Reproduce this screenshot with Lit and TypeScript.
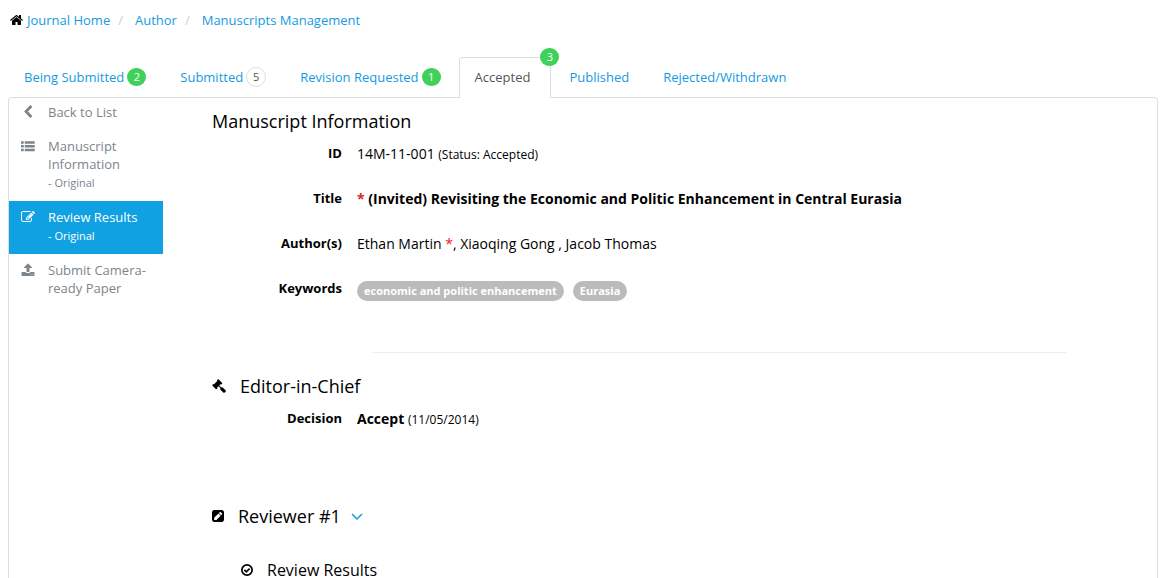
import { LitElement, html, css, svg, nothing } from "lit";
import { customElement, property, state } from "lit/decorators.js";

const ICONS: Record<string, unknown> = {
  home: svg`<path d="M1408 992v480q0 26-19 45t-45 19h-384v-384h-256v384h-384q-26 0-45-19t-19-45v-480q0-1 .5-3t.5-3l575-474 575 474q1 2 1 6zm223-69l-62 74q-8 9-21 11h-3q-13 0-21-7l-692-577-692 577q-12 8-24 7-13-2-21-11l-62-74q-8-10-7-23.5t11-21.5l719-599q32-26 76-26t76 26l244 204v-195q0-14 9-23t23-9h192q14 0 23 9t9 23v408l219 182q10 8 11 21.5t-7 23.5z"/>`,
  back: svg`<path d="M1427 301l-531 531 531 531q19 19 19 45t-19 45l-166 166q-19 19-45 19t-45-19l-742-742q-19-19-19-45t19-45l742-742q19-19 45-19t45 19l166 166q19 19 19 45t-19 45z"/>`,
  list: svg`<path d="M0 288h352v320H0zM0 768h352v320H0zM0 1248h352v320H0zM480 288h1280v320H480zM480 768h1280v320H480zM480 1248h1280v320H480z"/>`,
  edit: svg`<path d="M888 1184l116-116-152-152-116 116v56h96v96h56zm440-720q-16-16-33 1l-350 350q-17 17-1 33t33-1l350-350q17-17 1-33zm80 594v190q0 119-84.5 203.5t-203.5 84.500h-832q-119 0-203.5-84.5t-84.5-203.5v-832q0-119 84.5-203.5t203.5-84.5h832q63 0 117 25 15 7 18 23 3 17-9 29l-49 49q-14 14-32 8-23-6-45-6h-832q-66 0-113 47t-47 113v832q0 66 47 113t113 47h832q66 0 113-47t47-113v-126q0-13 9-22l64-64q15-15 35-7t20 29zm-96-738l288 288-672 672h-288v-288zm444 132l-92 92-288-288 92-92q28-28 68-28t68 28l152 152q28 28 28 68t-28 68z"/>`,
  upload: svg`<path d="M1344 1472q0-26-19-45t-45-19-45 19-19 45 19 45 45 19 45-19 19-45zm256 0q0-26-19-45t-45-19-45 19-19 45 19 45 45 19 45-19 19-45zm128-224v320q0 40-28 68t-68 28h-1472q-40 0-68-28t-28-68v-320q0-40 28-68t68-28h427q21 56 70.5 92t110.5 36h256q61 0 110.5-36t70.5-92h427q40 0 68 28t28 68zm-325-648q-17 40-59 40h-256v448q0 26-19 45t-45 19h-256q-26 0-45-19t-19-45v-448h-256q-42 0-59-40-17-39 14-69l448-448q18-19 45-19t45 19l448 448q31 30 14 69z"/>`,
  gavel: svg`<path d="M1771 1536q0 53-37 90l-107 108q-39 37-91 37-53 0-90-37l-363-364q-38-36-38-90 0-53 43-96l-256-256-126 126q-14 14-34 14t-34-14q2 2 12.5 12t12.5 13 10 11.5 10 13.5 6 13.5 5.5 16.5 1.5 18q0 38-28 68-3 3-16.5 18t-19 20.5-18.5 16.5-22 15.5-22 9-26 4.5q-40 0-68-28l-408-408q-28-28-28-68 0-13 4.5-26t9-22 15.5-22 16.5-18.5 20.5-19 18-16.5q30-28 68-28 10 0 18 1.5t16.5 5.5 13.5 6 13.5 10 11.5 10 13 12.5 12 12.5q-14-14-14-34t14-34l348-348q14-14 34-14t34 14q-2-2-12.5-12t-12.5-13-10-11.5-10-13.5-6-13.5-5.5-16.5-1.5-18q0-38 28-68 3-3 16.5-18t19-20.5 18.5-16.5 22-15.5 22-9 26-4.5q40 0 68 28l408 408q28 28 28 68 0 13-4.5 26t-9 22-15.5 22-16.5 18.5-20.5 19-18 16.5q-30 28-68 28-10 0-18-1.5t-16.5-5.5-13.5-6-13.5-10-11.5-10-13-12.5-12-12.5q14 14 14 34t-14 34l-126 126 256 256q43-43 96-43 52 0 91 37l363 363q37 39 37 91z"/>`,
  pencil: svg`<path fill-rule="evenodd" d="M416 128h960q119 0 203.500 84.500t84.500 203.500v960q0 119-84.500 203.500t-203.500 84.500h-960q-119 0-203.500-84.500t-84.500-203.500v-960q0-119 84.500-203.500t203.500-84.500zM404 1108v288h288l544-544-288-288zM1000 512l288 288 112-112q28-28 28-68t-28-68l-152-152q-28-28-68-28t-68 28z"/>`,
  check: svg`<circle cx="896" cy="896" r="656" fill="none" stroke="currentColor" stroke-width="224"/><path d="M560 880l250 250 420-420" fill="none" stroke="currentColor" stroke-width="220"/>`,
  down: svg`<path d="M260 640l636 636 636-636" fill="none" stroke="currentColor" stroke-width="190"/>`,
};

@customElement("ui-icon")
class UiIcon extends LitElement {
  @property() name = "home";
  @property({ type: Boolean, reflect: true }) narrow = false;
  static styles = css`
    :host { display: inline-flex; width: 14px; height: 14px; flex: none; }
    :host([narrow]) { width: 12px; }
    svg { width: 100%; height: 100%; fill: currentColor; }
  `;
  render() {
    const box = this.narrow ? "128 0 1536 1792" : "0 0 1792 1792";
    return html`<svg viewBox=${box} aria-hidden="true">${ICONS[this.name]}</svg>`;
  }
}

interface Tab { label: string; count?: number; tone?: string }
interface SideItem { label: string; icon: string; sub?: string }

const TABS: Tab[] = [
  { label: "Being Submitted", count: 2 },
  { label: "Submitted", count: 5, tone: "plain" },
  { label: "Revision Requested", count: 1 },
  { label: "Accepted", count: 3, tone: "corner" },
  { label: "Published" },
  { label: "Rejected/Withdrawn" },
];

const SIDE: SideItem[] = [
  { label: "Back to List", icon: "back" },
  { label: "Manuscript Information", icon: "list", sub: "- Original" },
  { label: "Review Results", icon: "edit", sub: "- Original" },
  { label: "Submit Camera-ready Paper", icon: "upload" },
];

@customElement("app-root")
class AppRoot extends LitElement {
  @state() private activeTab = "Accepted";
  @state() private activeItem = "Review Results";

  static styles = css`
    :host {
      display: flex;
      flex-direction: column;
      box-sizing: border-box;
      min-height: 100vh;
      padding: 0 8px;
      background: #fff;
      color: #000;
      font: 13px/18px "Open Sans", "Noto Sans", sans-serif;
    }
    a { color: #149bdf; text-decoration: none; }
    ul, ol, dl, dd, h2, h3 { margin: 0; padding: 0; list-style: none; font-weight: 400; }
    .crumbs { display: flex; align-items: center; padding: 11px 0 28px 2px; }
    .crumbs ui-icon { margin-right: 3px; }
    .crumbs li { display: flex; align-items: center; }
    .crumbs li + li::before { content: "/"; color: #ccc; padding: 0 12px 0 8px; }
    .tabs { display: flex; gap: 2px; position: relative; z-index: 1; }
    .tab {
      display: flex;
      align-items: center;
      gap: 3px;
      box-sizing: border-box;
      height: 41px;
      padding: 0 15px 2px;
      border: 1px solid transparent;
      border-bottom: 0;
      border-radius: 4px 4px 0 0;
      position: relative;
    }
    .tab.active { background: #fff; border-color: #ddd; color: #555; padding-right: 20px; }
    .badge {
      box-sizing: border-box;
      width: 19px;
      height: 18px;
      border-radius: 10px;
      background: #3fd159;
      color: #fff;
      font-size: 11px;
      line-height: 18px;
      text-align: center;
    }
    .badge.plain { width: 20px; height: 20px; background: #fff; border: 1px solid #ddd; color: #555; }
    .badge.corner { position: absolute; top: -10px; right: -9px; }
    .panel {
      display: flex;
      flex: 1;
      margin-top: -1px;
      border: 1px solid #ddd;
      border-bottom: 0;
      border-radius: 4px 4px 0 0;
    }
    .side { width: 154px; flex: none; }
    .side a { display: flex; gap: 13px; padding: 7px 12px 8px; color: #7b858c; }
    .side li:first-child a { padding-top: 5px; padding-bottom: 9px; }
    .side a.active { background: #0fa1e1; color: #fff; }
    .side ui-icon { margin-top: 2px; }
    .side small { display: block; font-size: 11px; line-height: 20px; }
    .main { flex: 1; min-width: 0; padding: 11px 0 0 49px; }
    h2 { display: flex; align-items: center; font-size: 18px; line-height: 24px; }
    .row { display: grid; grid-template-columns: 130px 1fr; gap: 15px; height: 45px; line-height: 20px; padding-top: 11px; box-sizing: border-box; }
    .row dt { text-align: right; font-weight: 700; line-height: 18px; }
    .row dd { font-size: 14px; }
    .row small, .row .date { font-size: 12px; }
    .row dd.strong, .row b { font-weight: 700; }
    .red { color: #e02222; }
    .tags { display: flex; align-items: flex-start; gap: 9px; padding-top: 2px; }
    .tag { background: #bbb; color: #fff; border-radius: 10px; font-size: 11px; font-weight: 700; padding: 0 7px; line-height: 20px; }
    hr { border: 0; border-top: 1px solid #eee; margin: 39px 91px 21px 160px; }
    .section { gap: 14px; }
    .reviewer { margin-top: 61px; }
    .toggle { border: 0; background: none; padding: 0; margin: 0 -5px; display: flex; color: #149bdf; cursor: pointer; }
    h3 { display: flex; align-items: center; gap: 14px; font-size: 16px; line-height: 16px; padding: 34px 0 0 29px; }
  `;

  private renderTab(t: Tab) {
    const active = t.label === this.activeTab;
    return html`<li>
      <a class="tab ${active ? "active" : ""}" href="#" @click=${(e: Event) => { e.preventDefault(); this.activeTab = t.label; }}>
        <span>${t.label}</span>${t.count ? html`<span class="badge ${t.tone ?? ""}">${t.count}</span>` : nothing}
      </a>
    </li>`;
  }

  private renderSide(s: SideItem) {
    return html`<li>
      <a class=${s.label === this.activeItem ? "active" : ""} href="#" @click=${(e: Event) => { e.preventDefault(); this.activeItem = s.label; }}>
        <ui-icon name=${s.icon}></ui-icon>
        <span>${s.label}${s.sub ? html`<small>${s.sub}</small>` : nothing}</span>
      </a>
    </li>`;
  }

  render() {
    return html`
      <nav aria-label="Breadcrumb">
        <ol class="crumbs">
          <li><ui-icon name="home"></ui-icon><a href="#">Journal Home</a></li>
          <li><a href="#">Author</a></li>
          <li><a href="#">Manuscripts Management</a></li>
        </ol>
      </nav>
      <ul class="tabs">${TABS.map((t) => this.renderTab(t))}</ul>
      <div class="panel">
        <ul class="side">${SIDE.map((s) => this.renderSide(s))}</ul>
        <main class="main">
          <h2>Manuscript Information</h2>
          <dl>
            <div class="row"><dt>ID</dt><dd>14M-11-001 <small>(Status: Accepted)</small></dd></div>
            <div class="row"><dt>Title</dt><dd class="strong"><span class="red">*</span> (Invited) Revisiting the Economic and Politic Enhancement in Central Eurasia</dd></div>
            <div class="row"><dt>Author(s)</dt><dd>Ethan Martin <span class="red">*</span>, Xiaoqing Gong , Jacob Thomas</dd></div>
            <div class="row"><dt>Keywords</dt><dd class="tags"><span class="tag">economic and politic enhancement</span><span class="tag">Eurasia</span></dd></div>
          </dl>
          <hr />
          <h2 class="section"><ui-icon name="gavel"></ui-icon>Editor-in-Chief</h2>
          <dl>
            <div class="row"><dt>Decision</dt><dd><b>Accept</b> <span class="date">(11/05/2014)</span></dd></div>
          </dl>
          <h2 class="section reviewer"><ui-icon name="pencil" narrow></ui-icon>Reviewer #1
            <button class="toggle" aria-label="Toggle reviewer details"><ui-icon name="down"></ui-icon></button>
          </h2>
          <h3><ui-icon name="check" narrow></ui-icon>Review Results</h3>
        </main>
      </div>
    `;
  }
}
